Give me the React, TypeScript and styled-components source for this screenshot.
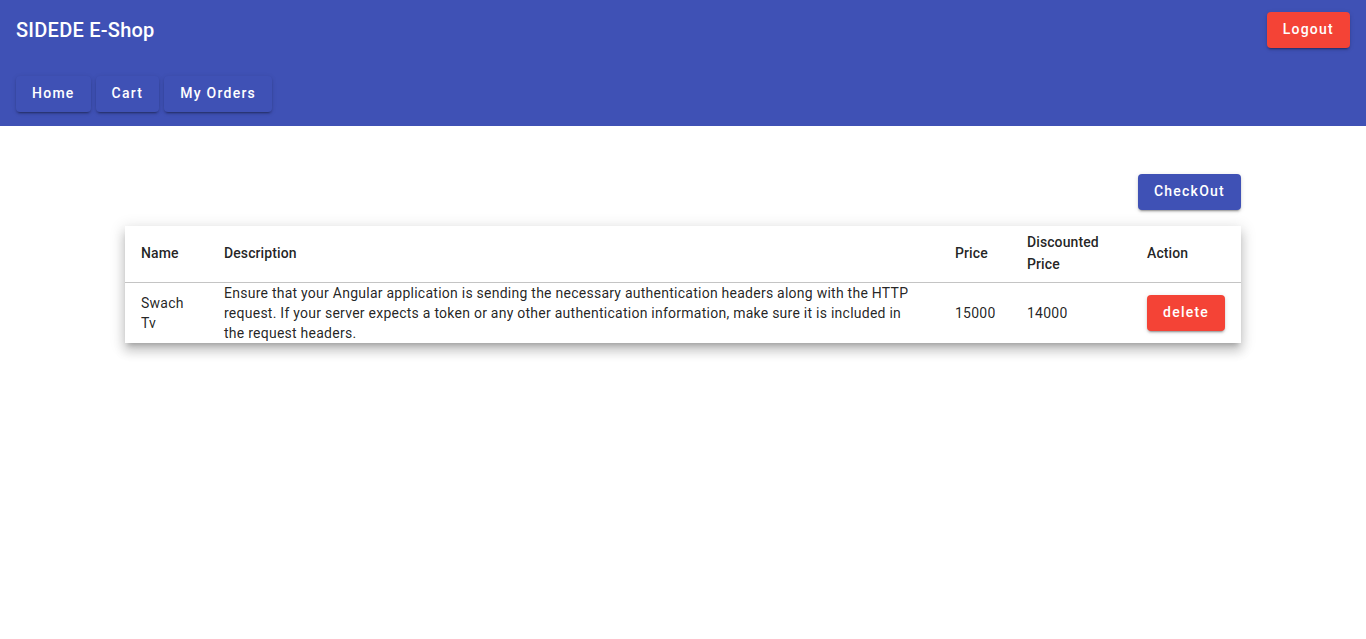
import React from "react";
import styled, { createGlobalStyle } from "styled-components";

const Global = createGlobalStyle`
  html, body { margin: 0; padding: 0; background: #fff; min-height: 100%; }
  html { height: 100%; }
  body { font-family: Roboto, "Helvetica Neue", sans-serif; }
  #root { min-height: 100vh; }
  * { box-sizing: border-box; }
`;

const Toolbar = styled.header`
  background: #3f51b5;
  color: #fff;
  display: flex;
  flex-direction: column;
`;

const TopRow = styled.div`
  height: 60px;
  padding: 0 16px;
  display: flex;
  align-items: center;
  justify-content: space-between;
`;

const Title = styled.span`
  font-family: Roboto, sans-serif;
  font-size: 20px;
  font-weight: 500;
  letter-spacing: 0.0125em;
  line-height: 32px;
`;

const NavRow = styled.nav`
  height: 66px;
  padding: 16px 16px 14px;
  display: flex;
  align-items: flex-start;
  gap: 5px;
`;

const RaisedButton = styled.button<{ $tone: "primary" | "warn" }>`
  height: 36px;
  padding: 0 16px 2px;
  border: none;
  border-radius: 4px;
  font-family: Roboto, sans-serif;
  font-size: 14px;
  font-weight: 500;
  letter-spacing: 0.0892857em;
  color: #fff;
  cursor: pointer;
  background: ${(p) => (p.$tone === "warn" ? "#f44336" : "#3f51b5")};
  box-shadow: 0 3px 1px -2px rgba(0, 0, 0, 0.2), 0 2px 2px 0 rgba(0, 0, 0, 0.14),
    0 1px 5px 0 rgba(0, 0, 0, 0.12);
  white-space: nowrap;
`;

const Main = styled.main`
  width: 1116px;
  margin: 48px auto 0;
  padding-bottom: 40px;
  display: flex;
  flex-direction: column;
  align-items: flex-end;
  gap: 16px;
`;

const Card = styled.div`
  width: 100%;
  background: #fff;
  box-shadow: 0 5px 5px -3px rgba(0, 0, 0, 0.2), 0 8px 10px 1px rgba(0, 0, 0, 0.14),
    0 3px 14px 2px rgba(0, 0, 0, 0.12);
`;

const Table = styled.table`
  width: 100%;
  border-collapse: collapse;
  table-layout: fixed;
`;

const HeadCell = styled.th`
  height: 56px;
  padding: 0 16px 2px;
  text-align: left;
  font-size: 14px;
  font-weight: 500;
  line-height: 22px;
  letter-spacing: 0.0071428571em;
  color: rgba(0, 0, 0, 0.87);
  border-bottom: 1px solid rgba(0, 0, 0, 0.12);
  vertical-align: middle;
`;

const Cell = styled.td`
  height: 52px;
  padding: 0 16px;
  font-size: 14px;
  font-weight: 400;
  line-height: 20px;
  letter-spacing: 0.0178571429em;
  color: rgba(0, 0, 0, 0.87);
  vertical-align: middle;
`;

const columns = [
  { key: "name", label: "Name", width: 83 },
  { key: "desc", label: "Description", width: 731 },
  { key: "price", label: "Price", width: 72 },
  { key: "disc", label: "Discounted Price", width: 120 },
  { key: "action", label: "Action", width: 110 },
];

export default function App() {
  return (
    <>
      <Global />
      <Toolbar>
        <TopRow>
          <Title>SIDEDE E-Shop</Title>
          <RaisedButton $tone="warn">Logout</RaisedButton>
        </TopRow>
        <NavRow>
          <RaisedButton $tone="primary">Home</RaisedButton>
          <RaisedButton $tone="primary">Cart</RaisedButton>
          <RaisedButton $tone="primary">My Orders</RaisedButton>
        </NavRow>
      </Toolbar>
      <Main>
        <RaisedButton $tone="primary">CheckOut</RaisedButton>
        <Card>
          <Table>
            <colgroup>
              {columns.map((c) => (
                <col key={c.key} style={{ width: c.width }} />
              ))}
            </colgroup>
            <thead>
              <tr>
                {columns.map((c) => (
                  <HeadCell key={c.key}>{c.label}</HeadCell>
                ))}
              </tr>
            </thead>
            <tbody>
              <tr>
                <Cell>Swach Tv</Cell>
                <Cell>
                  Ensure that your Angular application is sending the necessary authentication
                  headers along with the HTTP request. If your server expects a token or any other
                  authentication information, make sure it is included in the request headers.
                </Cell>
                <Cell>15000</Cell>
                <Cell>14000</Cell>
                <Cell>
                  <RaisedButton $tone="warn">delete</RaisedButton>
                </Cell>
              </tr>
            </tbody>
          </Table>
        </Card>
      </Main>
    </>
  );
}
